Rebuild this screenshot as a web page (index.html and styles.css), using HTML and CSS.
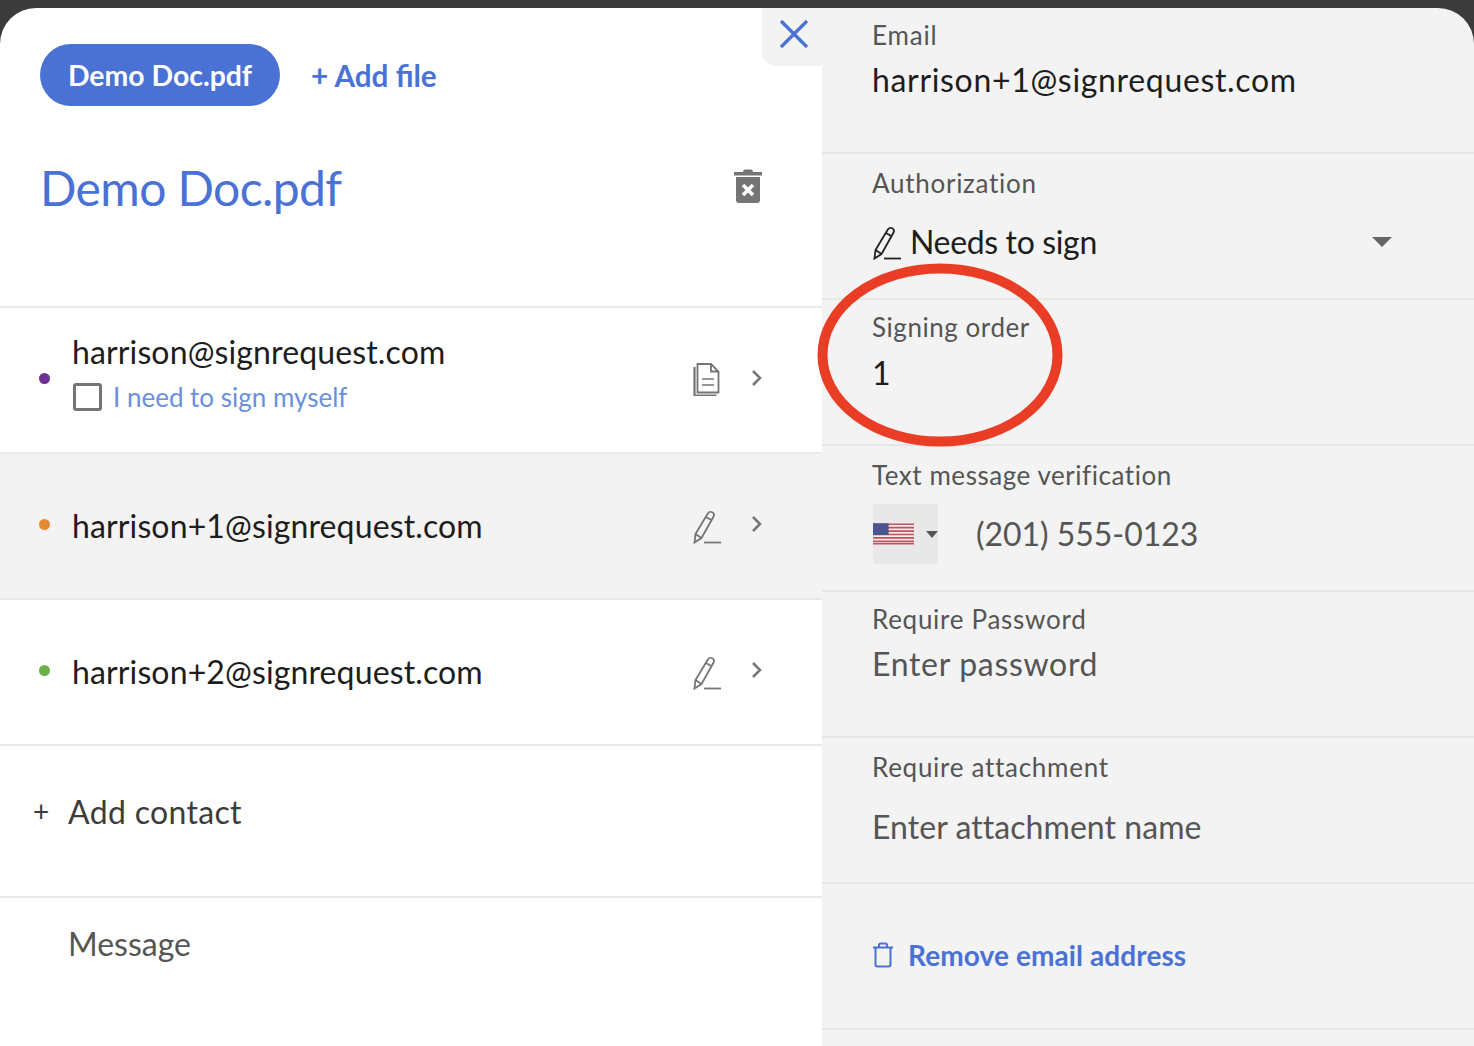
FILE: index.html
```html
<!DOCTYPE html>
<html lang="en">
<head>
<meta charset="utf-8">
<title>Demo Doc.pdf</title>
<link rel="stylesheet" href="styles.css">
</head>
<body>
<div class="app">
  <section class="left">
    <header class="top">
      <div class="tabs">
        <span class="pill">Demo Doc.pdf</span>
        <span class="add-file">+ Add file</span>
      </div>
      <div class="title-row">
        <h1 class="title">Demo Doc.pdf</h1>
        <svg class="trash" width="30" height="38" viewBox="0 0 30 38"><path d="M1 5h28v3.500H1zM10 5c0-1.500 1-2.500 2-2.500h6c1 0 2 1 2 2.500z" fill="#757575"/><path d="M3 10h24v23c0 2-1 3-3 3H6c-2 0-3-1-3-3z" fill="#757575"/><path d="M10 18l10 10M20 18L10 28" stroke="#fff" stroke-width="3.600"/></svg>
      </div>
    </header>
    <div class="row">
      <span class="dot dot-purple"></span>
      <div class="who who-first">
        <div class="email">harrison@signrequest.com</div>
        <div class="self"><span class="check"></span><span class="self-text">I need to sign myself</span></div>
      </div>
      <svg class="doc" width="30" height="34" viewBox="0 0 30 34" fill="none" stroke="#757575" stroke-width="1.800"><path d="M5.500 2H19l7.500 7.500v21H5.500zM19 2v7.500h7.500"/><path d="M2.500 5v28.500h22" stroke-width="2.200"/><path d="M10 17h12M10 23h12" stroke-width="1.600"/></svg>
      <svg class="chev" width="12" height="18" viewBox="0 0 12 18" fill="none" stroke="#757575" stroke-width="2.500"><path d="M2 2l7 7-7 7"/></svg>
    </div>
    <div class="row row-active">
      <span class="dot dot-orange"></span>
      <div class="who"><div class="email">harrison+1@signrequest.com</div></div>
      <svg class="pen" width="30" height="34" viewBox="0 0 30 34" fill="none" stroke="#757575" stroke-width="1.800"><path d="M3.500 24L15.500 4c1-1.800 3-2.800 4.800-1.800s2 3 1 4.800L9.500 28 2.500 32.500zM14 7l6 3.500M3.500 24l6 4"/><path d="M12 32.500h17"/></svg>
      <svg class="chev" width="12" height="18" viewBox="0 0 12 18" fill="none" stroke="#757575" stroke-width="2.500"><path d="M2 2l7 7-7 7"/></svg>
    </div>
    <div class="row">
      <span class="dot dot-green"></span>
      <div class="who"><div class="email">harrison+2@signrequest.com</div></div>
      <svg class="pen" width="30" height="34" viewBox="0 0 30 34" fill="none" stroke="#757575" stroke-width="1.800"><path d="M3.500 24L15.500 4c1-1.800 3-2.800 4.800-1.800s2 3 1 4.800L9.500 28 2.500 32.500zM14 7l6 3.500M3.500 24l6 4"/><path d="M12 32.500h17"/></svg>
      <svg class="chev" width="12" height="18" viewBox="0 0 12 18" fill="none" stroke="#757575" stroke-width="2.500"><path d="M2 2l7 7-7 7"/></svg>
    </div>
    <div class="add-contact"><span class="plus">+</span><span>Add contact</span></div>
    <div class="message">Message</div>
  </section>

  <section class="right">
    <div class="field field-first">
      <div class="label label-email">Email</div>
      <div class="value value-email">harrison+1@signrequest.com</div>
    </div>
    <div class="field">
      <div class="label label-wide">Authorization</div>
      <div class="select">
        <svg class="auth-pen" width="30" height="34" viewBox="0 0 30 34" fill="none" stroke="#222" stroke-width="1.800"><path d="M3.500 24L15.500 4c1-1.800 3-2.800 4.800-1.800s2 3 1 4.800L9.500 28 2.500 32.500zM14 7l6 3.500M3.500 24l6 4"/><path d="M12 32.500h17"/></svg>
        <span class="value value-auth">Needs to sign</span>
        <span class="caret"></span>
      </div>
    </div>
    <div class="field field-tight">
      <div class="label">Signing order</div>
      <div class="value value-order">1</div>
    </div>
    <div class="field">
      <div class="label">Text message verification</div>
      <div class="phone">
        <div class="flag-box">
          <svg width="42" height="22" viewBox="0 0 42 22"><rect width="42" height="22" fill="#f6e9ea"/><path d="M0 1h42M0 4.500h42M0 8h42M0 11.500h42M0 15h42M0 18.500h42M0 21h42" stroke="#c0525f" stroke-width="1.700"/><rect width="16" height="12" fill="#4c5490"/></svg>
          <span class="flag-caret"></span>
        </div>
        <span class="value value-muted value-phone">(201) 555-0123</span>
      </div>
    </div>
    <div class="field field-tight">
      <div class="label label-wide">Require Password</div>
      <div class="value value-muted value-password">Enter password</div>
    </div>
    <div class="field">
      <div class="label label-wide">Require attachment</div>
      <div class="value value-muted value-attach">Enter attachment name</div>
    </div>
    <div class="field field-remove">
      <svg width="22" height="26" viewBox="0 0 22 26" fill="none" stroke="#4a72d4" stroke-width="2"><path d="M1 5.500h20M3.500 5.500v17c0 1.500.5 2 2 2h11c1.500 0 2-.5 2-2v-17M7 5.500V3c0-1 .5-1.500 1.500-1.500h5c1 0 1.500.5 1.500 1.500v2.500"/></svg>
      <span class="remove">Remove email address</span>
    </div>
    <div class="field-tail"></div>
  </section>

  <div class="close-tab">
    <svg width="30" height="30" viewBox="0 0 30 30" stroke="#4a72d4" stroke-width="3.200" fill="none"><path d="M2 2l26 26M28 2L2 28"/></svg>
  </div>
  <svg class="ring" width="250" height="187" viewBox="0 0 250 187" fill="none"><ellipse cx="125" cy="93" rx="117.500" ry="86.500" stroke="#e93d25" stroke-width="10"/></svg>
</div>
</body>
</html>
```
FILE: styles.css
```css
* { box-sizing: border-box; }
html, body { margin: 0; padding: 0; height: 100%; overflow: hidden; }
body { background: #3b3b3b; font-family: Lato, "Open Sans", sans-serif; color: #1d1d1d; }

.app { position: relative; display: grid; grid-template-columns: 822px 1fr; height: 1046px; padding-top: 8px; overflow: hidden; }
.left { background: #fff; border-radius: 36px 0 0 0; display: flex; flex-direction: column; }
.right { background: #f3f3f3; border-radius: 0 36px 0 0; display: flex; flex-direction: column; }

.top { height: 300px; padding: 36px 59px 0 40px; border-bottom: 2px solid #e9e9e9; }
.tabs { display: flex; align-items: center; gap: 31px; }
.pill { width: 240px; text-align: center; background: #4a72d4; color: #fff; font-size: 28.400px; font-weight: 700; line-height: 62px; height: 62px; border-radius: 31px; }
.add-file { color: #4a72d4; font-size: 29.700px; font-weight: 700; }
.title-row { display: flex; align-items: center; justify-content: space-between; margin-top: 51px; }
.title { margin: 0; color: #4a72d4; font-size: 48px; line-height: 62px; font-weight: 400; letter-spacing: -0.6px; }
.trash { margin-top: -4px; }

.row { height: 146px; display: flex; align-items: center; padding: 0 59px 4px 39px; border-bottom: 2px solid #e9e9e9; }
.row-active { background: #f3f3f3; }
.dot { width: 11px; height: 11px; border-radius: 50%; flex: none; }
.dot-purple { background: #6f2f93; }
.dot-orange { background: #e38a33; }
.dot-green { background: #6cb049; }
.who { flex: 1; margin: 4px 0 0 22px; }
.who-first { margin: 0 0 13px 22px; }
.email { font-size: 32px; line-height: 40px; letter-spacing: 0.13px; }
.self { display: flex; align-items: center; gap: 11px; margin-top: 10px; padding-left: 1px; }
.check { width: 29px; height: 28px; border: 3px solid #757575; border-radius: 3px; }
.self-text { color: #6a8fdd; font-size: 26px; line-height: 30px; }
.doc { margin: 2px 29px 0 0; }
.pen { margin: 6px 29px 0 6px; }
.chev { flex: none; }

.add-contact { height: 152px; display: flex; align-items: center; gap: 17px; padding: 0 0 20px 33px; font-size: 32px; color: #3c3c3c; border-bottom: 2px solid #e9e9e9; letter-spacing: 0.33px; }
.plus { font-size: 28px; width: 18px; }
.message { padding: 26px 0 0 68px; font-size: 32px; line-height: 40px; color: #555; }

.field { height: 146px; padding: 11px 50px 0; border-bottom: 2px solid #e6e6e6; flex: none; }
.field-first { padding-top: 9px; }
.field-tight { padding-top: 9px; }
.label { font-size: 26px; line-height: 36px; color: #555; letter-spacing: 0.55px; }
.label-email { letter-spacing: 0.85px; }
.label-wide { letter-spacing: 0.72px; }
.value { font-size: 32px; line-height: 40px; color: #1d1d1d; letter-spacing: 0.25px; margin-top: 7px; }
.value-muted { color: #555; }
.value-email { letter-spacing: 0.67px; }
.value-auth { letter-spacing: -0.35px; }
.value-order { margin-top: 8px; }
.value-phone { letter-spacing: -0.04px; }
.value-password { letter-spacing: 0.68px; }
.value-attach { margin-top: 22px; letter-spacing: 0.06px; }
.select { display: flex; align-items: center; margin-top: 16px; height: 50px; }
.select .value { margin: 0; }
.auth-pen { margin-right: 8px; margin-top: 2px; }
.caret { width: 0; height: 0; margin-left: auto; margin-right: 32px; border-left: 10px solid transparent; border-right: 10px solid transparent; border-top: 10px solid #666; }
.phone { display: flex; align-items: center; margin-top: 11px; gap: 38px; padding-left: 1px; }
.phone .value { margin: 0; }
.flag-box { width: 65px; height: 60px; background: #e8e8e8; display: flex; align-items: center; gap: 12px; }
.flag-caret { width: 0; height: 0; border-left: 6px solid transparent; border-right: 6px solid transparent; border-top: 7px solid #555; }
.field-remove { display: flex; align-items: center; gap: 14px; padding: 0 50px 2px; }
.remove { color: #4a72d4; font-size: 28px; font-weight: 700; letter-spacing: 0.1px; }
.field-tail { flex: 1; }

.close-tab { position: absolute; top: 8px; left: 762px; width: 60px; height: 58px; background: #f3f3f3; border-radius: 0 0 0 14px; display: flex; align-items: center; justify-content: center; padding: 0 0 6px 4px; }
.ring { position: absolute; left: 815px; top: 262px; }
```
